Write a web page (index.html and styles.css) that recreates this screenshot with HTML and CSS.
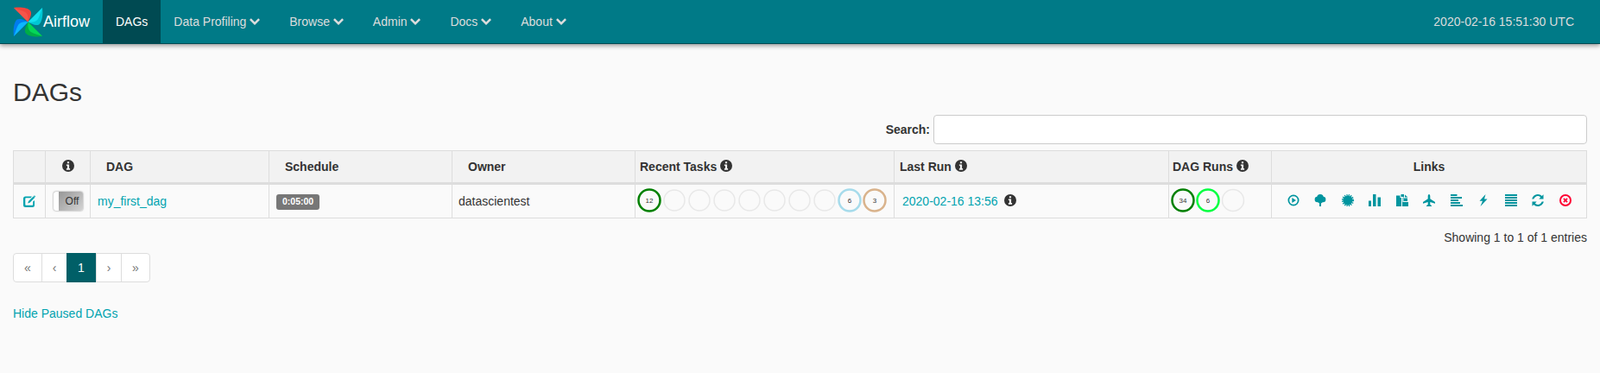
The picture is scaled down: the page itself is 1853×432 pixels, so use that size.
FILE: index.html
```html
<!DOCTYPE html>
<html lang="en">
<head>
    <meta charset="UTF-8">
    <title>Airflow - DAGs</title>
    <link rel="stylesheet" href="styles.css">
</head>
<body>
    <svg class="defs" width="0" height="0">
        <symbol id="info" viewBox="0 0 14 14"><path fill-rule="evenodd" d="M7 0a7 7 0 1 0 0 14A7 7 0 0 0 7 0zM5.900 2.200h2.200v2H5.900zM4.900 5.400h3.200v4.700h1v1.600H4.900v-1.600h1V7h-1z"/></symbol>
        <symbol id="chevron" viewBox="0 0 12 10"><path d="M1.800 1.200L6 5.400l4.200-4.200L12 3 6 9 0 3z"/></symbol>
        <g id="blade">
            <path class="blade-main" d="M1 1C9 0 18 1 21 5 23 9 20 14 18 18z"/>
            <path class="blade-inner" d="M18 18C18.500 13 18 9 15 6.500 12 4.500 6 3 1 1z"/>
        </g>
    </svg>
    <nav class="navbar">
        <a class="brand" href="#">
            <svg class="logo" viewBox="0 0 36 36">
                <use class="blade-red" href="#blade"/>
                <use class="blade-cyan" href="#blade" transform="rotate(90 18 18)"/>
                <use class="blade-green" href="#blade" transform="rotate(180 18 18)"/>
                <use class="blade-blue" href="#blade" transform="rotate(270 18 18)"/>
            </svg>
            <span>Airflow</span>
        </a>
        <ul class="nav-menu">
            <li class="active"><a href="#">DAGs</a></li>
            <li><a href="#">Data Profiling <svg class="chevron"><use href="#chevron"/></svg></a></li>
            <li><a href="#">Browse <svg class="chevron"><use href="#chevron"/></svg></a></li>
            <li><a href="#">Admin <svg class="chevron"><use href="#chevron"/></svg></a></li>
            <li><a href="#">Docs <svg class="chevron"><use href="#chevron"/></svg></a></li>
            <li><a href="#">About <svg class="chevron"><use href="#chevron"/></svg></a></li>
        </ul>
        <div class="clock">2020-02-16 15:51:30 UTC</div>
    </nav>

    <div class="container">
        <h2>DAGs</h2>
        <div class="search-row">
            <label for="dag-search">Search:</label>
            <input type="search" id="dag-search">
        </div>

        <table class="dags">
            <colgroup>
                <col class="col-edit"><col class="col-toggle"><col class="col-dag"><col class="col-schedule">
                <col class="col-owner"><col class="col-tasks"><col class="col-run"><col class="col-runs"><col>
            </colgroup>
            <thead>
                <tr>
                    <th></th>
                    <th class="center"><svg class="info"><use href="#info"/></svg></th>
                    <th class="pad">DAG</th>
                    <th class="pad">Schedule</th>
                    <th class="pad">Owner</th>
                    <th>Recent Tasks <svg class="info"><use href="#info"/></svg></th>
                    <th class="th-run">Last Run <svg class="info"><use href="#info"/></svg></th>
                    <th class="th-runs">DAG Runs <svg class="info"><use href="#info"/></svg></th>
                    <th class="center">Links</th>
                </tr>
            </thead>
            <tbody>
                <tr>
                    <td class="center">
                        <svg class="edit" viewBox="0 0 14 14"><path fill-rule="evenodd" d="M2.500 1.500H10L8.500 3.300H3a.7.7 0 0 0-.7.7v7a.7.7 0 0 0 .7.7h7.500a.7.7 0 0 0 .7-.7V7.500L13 6v5.500A2.500 2.500 0 0 1 10.500 14h-8A2.500 2.500 0 0 1 0 11.500v-7.500a2.500 2.500 0 0 1 2.500-2.500z"/><path d="M11.800 1.200l1.500 1.500L7.800 8.600l-2.600.8.800-2.500z"/><path d="M12.300.7a.8.8 0 0 1 1.100 0l.3.300a.8.8 0 0 1 0 1.100l-.300.300-1.400-1.400z"/></svg>
                    </td>
                    <td class="center">
                        <div class="toggle"><span class="toggle-handle"></span><span class="toggle-off">Off</span></div>
                    </td>
                    <td class="dag-name"><a href="#">my_first_dag</a></td>
                    <td class="schedule"><span class="label">0:05:00</span></td>
                    <td class="owner">datascientest</td>
                    <td class="circles">
                        <svg class="task-stats" width="280" height="32">
                            <g class="count"><circle class="ok" cx="16" cy="16" r="12.500"/><text x="16" y="19">12</text></g>
                            <circle class="empty" cx="45" cy="16" r="12"/>
                            <circle class="empty" cx="74" cy="16" r="12"/>
                            <circle class="empty" cx="103" cy="16" r="12"/>
                            <circle class="empty" cx="132" cy="16" r="12"/>
                            <circle class="empty" cx="161" cy="16" r="12"/>
                            <circle class="empty" cx="190" cy="16" r="12"/>
                            <circle class="empty" cx="219" cy="16" r="12"/>
                            <g class="count"><circle class="queued" cx="248" cy="16" r="12.500"/><text x="248" y="19">6</text></g>
                            <g class="count"><circle class="retry" cx="277" cy="16" r="12.500"/><text x="277" y="19">3</text></g>
                        </svg>
                    </td>
                    <td class="last-run"><a href="#">2020-02-16 13:56</a><svg class="info"><use href="#info"/></svg></td>
                    <td class="circles">
                        <svg class="task-stats" width="100" height="32">
                            <g class="count"><circle class="ok" cx="16" cy="16" r="12.500"/><text x="16" y="19">34</text></g>
                            <g class="count"><circle class="running" cx="45" cy="16" r="12.500"/><text x="45" y="19">6</text></g>
                            <circle class="empty" cx="74" cy="16" r="12.500"/>
                        </svg>
                    </td>
                    <td>
                        <div class="links">
                            <svg viewBox="0 0 14 14"><path fill-rule="evenodd" d="M7 .5a6.500 6.500 0 1 0 0 13 6.500 6.500 0 0 0 0-13zM7 2.200a4.800 4.800 0 1 1 0 9.600 4.800 4.800 0 0 1 0-9.600z"/><path d="M5.300 3.900L10 7l-4.700 3.100z"/></svg>
                            <svg viewBox="0 0 14 14"><circle cx="7" cy="3.800" r="3.800"/><circle cx="3.800" cy="6" r="3.200"/><circle cx="10.200" cy="6" r="3.200"/><circle cx="7" cy="7.500" r="3"/><path d="M6 8h2v6H6z"/></svg>
                            <svg viewBox="0 0 14 14"><circle cx="7" cy="7" r="5.600"/><circle class="teeth" cx="7" cy="7" r="6.100"/></svg>
                            <svg viewBox="0 0 14 14"><path d="M0 7.500h3V14H0zM5 0h3.500v14H5zM10.500 3.500H14V14h-3.500z"/></svg>
                            <svg viewBox="0 0 14 14"><path d="M0 1.500h4.500V4H6v10H0z"/><path d="M7 4h.5V9H14v5H7z"/><path d="M5.500 0H9v4.500h4V8H8.500V3H5.500z"/><path d="M10 .5l3.500 3H10z"/></svg>
                            <svg viewBox="0 0 14 14"><path d="M7 0c.8 0 1.300 1.300 1.300 2.500v2.800L14 9v1.700L8.300 9v3l1.700 1.200V14H4v-.8L5.700 12V9L0 10.700V9l5.700-3.700V2.500C5.700 1.300 6.200 0 7 0z"/></svg>
                            <svg viewBox="0 0 14 14"><path d="M0 0h7.500v2H0zM0 3h13v2H0zM0 6h9v2H0zM0 9h11v2H0zM0 12h14v2H0z"/></svg>
                            <svg viewBox="0 0 14 14"><path d="M9.500 0L2.500 7.800H6L3.500 14l8-8.500H8z"/></svg>
                            <svg viewBox="0 0 14 14"><path d="M0 0h14v2H0zM0 3h14v2H0zM0 6h14v2H0zM0 9h14v2H0zM0 12h14v2H0z"/></svg>
                            <svg viewBox="0 0 14 14"><path d="M7 0c1.900 0 3.500.8 4.700 2L13.500 .3V5.500H8.300L10.200 3.500C9.400 2.700 8.300 2.100 7 2.100 4.800 2.100 3 3.600 2.300 5.500H.2C.9 2.400 3.700 0 7 0z"/><path d="M7 14c-1.900 0-3.500-.8-4.700-2L.5 13.700V8.500h5.200L3.800 10.500c.8.800 1.900 1.400 3.200 1.400 2.200 0 4-1.500 4.700-3.400h2.100C13.100 11.600 10.300 14 7 14z"/></svg>
                            <svg class="remove" viewBox="0 0 14 14"><path fill-rule="evenodd" d="M7 0a7 7 0 1 0 0 14A7 7 0 0 0 7 0zM7 2a5 5 0 1 1 0 10A5 5 0 0 1 7 2z"/><path d="M4.300 5.500l1.200-1.200L7 5.800l1.500-1.500 1.200 1.200L8.200 7l1.500 1.500-1.200 1.200L7 8.200 5.500 9.700 4.300 8.500 5.800 7z"/></svg>
                        </div>
                    </td>
                </tr>
            </tbody>
        </table>

        <div class="entries">Showing 1 to 1 of 1 entries</div>
        <ul class="pagination">
            <li class="page-first">«</li>
            <li>‹</li>
            <li class="current">1</li>
            <li>›</li>
            <li class="page-last">»</li>
        </ul>
        <a class="hide-paused" href="#">Hide Paused DAGs</a>
    </div>
</body>
</html>
```

FILE: styles.css
```css
body {
    margin: 0;
    background: #fafafa;
    color: #333;
    font-family: "Liberation Sans", Arial, sans-serif;
    font-size: 14px;
    line-height: 20px;
}

a {
    color: #00a3af;
    text-decoration: none;
}

.defs {
    display: block;
    height: 0;
}

.navbar {
    display: flex;
    align-items: stretch;
    height: 50px;
    padding-left: 15px;
    background: #007a87;
    border-bottom: 1px solid #004a52;
    box-shadow: 0 2px 5px rgba(0, 0, 0, 0.4);
}

.brand {
    display: flex;
    align-items: center;
    width: 104px;
    color: #fff;
    font-size: 18px;
}

.logo {
    width: 35px;
    height: 35px;
}

.blade-red { --main: #f2453d; --inner: #f5554a; }
.blade-cyan { --main: #00c7d4; --inner: #11e1ee; }
.blade-green { --main: #00ad46; --inner: #04d659; }
.blade-blue { --main: #017cee; --inner: #0cb6ff; }
.blade-main { fill: var(--main); }
.blade-inner { fill: var(--inner); }

.nav-menu {
    display: flex;
    margin: 0;
    padding: 0;
    list-style: none;
}

.nav-menu a {
    display: block;
    padding: 15px;
    color: #ddd;
}

.nav-menu .active a {
    background: #004a52;
    color: #fff;
}

.chevron {
    width: 12px;
    height: 10px;
    margin-right: 4px;
    fill: #ddd;
}

.clock {
    margin-left: auto;
    padding: 15px 30px 0 0;
    color: #ddd;
}

.container {
    padding: 0 15px;
}

h2 {
    margin: 0;
    padding-top: 39px;
    font-size: 30px;
    font-weight: 500;
    line-height: 33px;
}

.search-row {
    display: flex;
    justify-content: flex-end;
    align-items: center;
    gap: 4px;
    margin-top: 10px;
}

.search-row label {
    font-weight: bold;
}

.search-row input {
    box-sizing: border-box;
    width: 757px;
    height: 34px;
    background: #fff;
    border: 1px solid #ccc;
    border-radius: 4px;
}

.dags {
    box-sizing: border-box;
    width: 1823px;
    margin-top: 7px;
    border-collapse: collapse;
    table-layout: fixed;
}

.col-edit { width: 37px; }
.col-toggle { width: 52px; }
.col-dag { width: 207px; }
.col-schedule { width: 212px; }
.col-owner { width: 212px; }
.col-tasks { width: 300px; }
.col-run { width: 318px; }
.col-runs { width: 119px; }

.dags th,
.dags td {
    padding: 0 5px;
    border: 1px solid #ddd;
}

.dags th {
    height: 36px;
    background: #f2f2f2;
    border-bottom: 3px solid #ddd;
    text-align: left;
    white-space: nowrap;
}

.dags td {
    height: 36px;
}

.dags .center {
    text-align: center;
}

.dags .pad {
    padding-left: 18px;
}

.dags .th-run {
    padding-left: 6px;
}

.dags .th-runs {
    padding-left: 4px;
}

.dags .dag-name {
    padding-left: 8px;
}

.info {
    width: 14px;
    height: 14px;
    fill: #333;
    vertical-align: -1px;
}

.edit {
    display: block;
    width: 14px;
    height: 14px;
    margin: 0 auto;
    fill: #00a3af;
}

.toggle {
    display: flex;
    box-sizing: border-box;
    width: 34px;
    height: 22px;
    margin: 0 auto;
    background: linear-gradient(135deg, #8f8f8f, #d4d4d4);
    border-radius: 3px;
    box-shadow: 0 0 2px rgba(0, 0, 0, 0.5);
    font-size: 12px;
    line-height: 23px;
}

.toggle-handle {
    width: 6px;
    background: #fff;
    border-radius: 3px 0 0 3px;
}

.toggle-off {
    flex: 1;
    padding-left: 4px;
}

.label {
    display: inline-block;
    padding: 2px 7px 3px;
    background: #777;
    border-radius: 3px;
    color: #fff;
    font-size: 10.500px;
    font-weight: bold;
    line-height: 13px;
    vertical-align: middle;
}

.dags .schedule {
    padding-left: 8px;
}

.dags .owner {
    padding-left: 7px;
}

.dags .circles {
    padding: 0 0 2px;
}

.task-stats {
    display: block;
    overflow: visible;
}

.task-stats circle {
    fill: #fff;
    fill-opacity: 0;
    stroke-width: 1.500;
}

.task-stats .empty { stroke: #e8e8e8; }
.task-stats .ok { stroke: #008000; stroke-width: 2.500; }
.task-stats .queued { stroke: #a6dbeb; stroke-width: 2.500; }
.task-stats .retry { stroke: #d9b38c; stroke-width: 2.500; }
.task-stats .running { stroke: #00ff40; stroke-width: 2.500; }

.task-stats text {
    fill: #333;
    font-size: 8px;
    text-anchor: middle;
}

.dags .last-run {
    padding-left: 9px;
}

.last-run .info {
    margin-left: 7px;
}

.links {
    display: flex;
    justify-content: center;
    gap: 17.500px;
    padding-bottom: 3px;
}

.links svg {
    width: 14px;
    height: 14px;
    flex: none;
    fill: #00959f;
    overflow: visible;
}

.links .teeth {
    fill: none;
    stroke: #00959f;
    stroke-width: 2;
    stroke-dasharray: 1.200 1.200;
}

.links .remove {
    fill: #ff0033;
}

.entries {
    padding-top: 12px;
    text-align: right;
}

.pagination {
    display: flex;
    width: max-content;
    margin: 8px 0 0;
    padding: 0;
    list-style: none;
    background: #fff;
    border: 1px solid #ddd;
    border-radius: 4px;
}

.pagination li {
    box-sizing: border-box;
    width: 29px;
    height: 32px;
    border-left: 1px solid #ddd;
    color: #777;
    line-height: 32px;
    text-align: center;
}

.pagination .page-first {
    width: 32px;
    border-left: 0;
}

.pagination .page-last {
    width: 33px;
}

.pagination .current {
    width: 34px;
    height: 34px;
    margin: -1px 0;
    background: #005f67;
    border-left: 0;
    color: #fff;
    line-height: 34px;
}

.hide-paused {
    display: block;
    margin-top: 26px;
}
```
